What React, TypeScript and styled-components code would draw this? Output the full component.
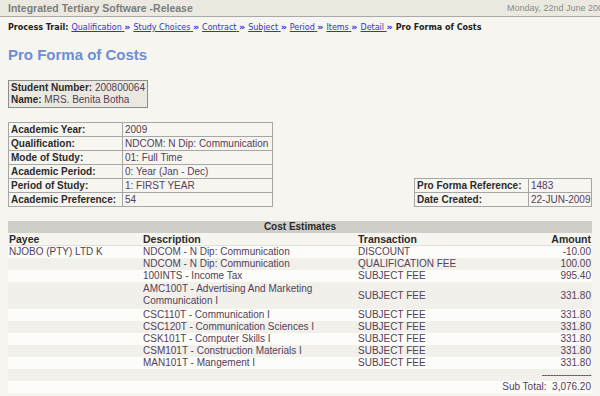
import React from "react";
import styled, { createGlobalStyle } from "styled-components";

const GlobalStyle = createGlobalStyle`
  html, body {
    margin: 0;
    padding: 0;
    background: #f6f5f0;
    overflow: hidden;
  }
  body {
    font-family: "Liberation Sans", Arial, sans-serif;
    font-size: 10px;
    color: #2b2b2b;
  }
`;

const Page = styled.div`
  width: 600px;
  height: 396px;
  overflow: hidden;
`;

const TopBar = styled.div`
  display: flex;
  justify-content: space-between;
  align-items: center;
  width: 612px;
  height: 17px;
  box-sizing: border-box;
  padding: 0 4px 0 8px;
  background: #ebe9df;
  border-bottom: 1px solid #a9a9a9;
`;

const AppName = styled.span`
  font-weight: bold;
  font-size: 10.5px;
  color: #7c7c7c;
`;

const Today = styled.span`
  font-size: 9px;
  color: #8a8a8a;
  white-space: nowrap;
`;

const Trail = styled.div`
  padding: 4px 8px 0;
  font-family: "DejaVu Sans", Verdana, sans-serif;
  font-size: 8px;
  line-height: 12px;
  color: #222;
  white-space: nowrap;
`;

const TrailLabel = styled.b`
  margin-right: 3px;
`;

const TrailLink = styled.a`
  color: #3434c4;
  text-decoration: underline;
`;

const Sep = styled.span`
  color: #3434c4;
  font-weight: bold;
  font-size: 9.5px;
  margin: 0 3px 0 0;
`;

const Current = styled.b``;

const Content = styled.div`
  padding: 0 8px;
`;

const Title = styled.h1`
  margin: 12px 0 0;
  font-size: 15px;
  line-height: 18px;
  font-weight: bold;
  color: #6b8ed6;
`;

const StudentBox = styled.div`
  display: inline-block;
  margin-top: 16px;
  padding: 1px 2px 1px 2px;
  border: 1px solid #8c8c8c;
  background: #ebe9df;
  line-height: 12px;
`;

const Line = styled.div``;

const Label = styled.b`
  color: #2b2b2b;
`;

const Value = styled.span`
  color: #54405a;
`;

const InfoRow = styled.div`
  display: flex;
  justify-content: space-between;
  align-items: flex-end;
  margin-top: 14px;
`;

const InfoTable = styled.table<{ $width: number }>`
  width: ${(p) => p.$width}px;
  table-layout: fixed;
  border-collapse: collapse;
  border: 1px solid #bdbdbd;
`;

const Col = styled.col<{ $width?: number }>`
  width: ${(p) => (p.$width ? `${p.$width}px` : "auto")};
`;

const InfoLabel = styled.th`
  text-align: left;
  font-weight: bold;
  color: #2b2b2b;
  border: 1px solid #a6a6a6;
  padding: 0 2px;
  height: 13px;
  line-height: 12px;
  white-space: nowrap;
`;

const InfoValue = styled.td`
  color: #54405a;
  border: 1px solid #a6a6a6;
  padding: 0 2px;
  height: 13px;
  line-height: 12px;
  white-space: nowrap;
`;

const CostTable = styled.table`
  width: 584px;
  table-layout: fixed;
  margin-top: 14px;
  border-collapse: collapse;
`;

const CostTitle = styled.th`
  background: #d0cec8;
  font-weight: bold;
  text-align: center;
  height: 12px;
  line-height: 12px;
  padding: 0;
  color: #2b2b2b;
`;

const ColHead = styled.th<{ $right?: boolean }>`
  text-align: ${(p) => (p.$right ? "right" : "left")};
  font-weight: bold;
  font-size: 10.5px;
  color: #2b2b2b;
  padding: 0 1px;
  height: 12px;
  line-height: 12px;
  border-bottom: 1px solid #e2e0da;
`;

const CostRow = styled.tr<{ $shade: boolean }>`
  background: ${(p) => (p.$shade ? "#f1f0ea" : "#fcfcf9")};
`;

const Cell = styled.td<{ $right?: boolean }>`
  text-align: ${(p) => (p.$right ? "right" : "left")};
  color: #54405a;
  padding: 0 1px;
  line-height: 12px;
  height: 12px;
  vertical-align: middle;
  white-space: nowrap;
`;

const WrapCell = styled(Cell)`
  white-space: normal;
  line-height: 12px;
  padding: 1px 18px 2px 1px;
`;

const Dashes = styled.span`
  letter-spacing: -0.6px;
  color: #54405a;
`;

const info = [
  ["Academic Year:", "2009"],
  ["Qualification:", "NDCOM: N Dip: Communication"],
  ["Mode of Study:", "01: Full Time"],
  ["Academic Period:", "0: Year (Jan - Dec)"],
  ["Period of Study:", "1: FIRST YEAR"],
  ["Academic Preference:", "54"],
];

const reference = [
  ["Pro Forma Reference:", "1483"],
  ["Date Created:", "22-JUN-2009"],
];

const costs = [
  ["NJOBO (PTY) LTD K", "NDCOM - N Dip: Communication", "DISCOUNT", "-10.00"],
  ["", "NDCOM - N Dip: Communication", "QUALIFICATION FEE", "100.00"],
  ["", "100INTS - Income Tax", "SUBJECT FEE", "995.40"],
  ["", "AMC100T - Advertising And Marketing Communication I", "SUBJECT FEE", "331.80"],
  ["", "CSC110T - Communication I", "SUBJECT FEE", "331.80"],
  ["", "CSC120T - Communication Sciences I", "SUBJECT FEE", "331.80"],
  ["", "CSK101T - Computer Skills I", "SUBJECT FEE", "331.80"],
  ["", "CSM101T - Construction Materials I", "SUBJECT FEE", "331.80"],
  ["", "MAN101T - Mangement I", "SUBJECT FEE", "331.80"],
];

const trail = ["Qualification", "Study Choices", "Contract", "Subject", "Period", "Items", "Detail"];

export default function App() {
  return (
    <Page>
      <GlobalStyle />
      <TopBar>
        <AppName>Integrated Tertiary Software -Release</AppName>
        <Today>Monday, 22nd June 2009</Today>
      </TopBar>
      <Trail>
        <TrailLabel>Process Trail:</TrailLabel>
        {trail.map((t) => (
          <React.Fragment key={t}>
            <TrailLink href="#">{t} </TrailLink>
            <Sep>»</Sep>
          </React.Fragment>
        ))}
        <Current>Pro Forma of Costs</Current>
      </Trail>
      <Content>
        <Title>Pro Forma of Costs</Title>
        <StudentBox>
          <Line>
            <Label>Student Number:</Label> <Value>200800064</Value>
          </Line>
          <Line>
            <Label>Name:</Label> <Value>MRS. Benita Botha</Value>
          </Line>
        </StudentBox>
        <InfoRow>
          <InfoTable $width={265}>
            <colgroup>
              <Col $width={114} />
              <Col />
            </colgroup>
            <tbody>
              {info.map(([k, v]) => (
                <tr key={k}>
                  <InfoLabel>{k}</InfoLabel>
                  <InfoValue>{v}</InfoValue>
                </tr>
              ))}
            </tbody>
          </InfoTable>
          <InfoTable $width={178}>
            <colgroup>
              <Col $width={114} />
              <Col />
            </colgroup>
            <tbody>
              {reference.map(([k, v]) => (
                <tr key={k}>
                  <InfoLabel>{k}</InfoLabel>
                  <InfoValue>{v}</InfoValue>
                </tr>
              ))}
            </tbody>
          </InfoTable>
        </InfoRow>
        <CostTable>
          <colgroup>
            <Col $width={134} />
            <Col $width={215} />
            <Col $width={180} />
            <Col />
          </colgroup>
          <thead>
            <tr>
              <CostTitle colSpan={4}>Cost Estimates</CostTitle>
            </tr>
            <tr>
              <ColHead>Payee</ColHead>
              <ColHead>Description</ColHead>
              <ColHead>Transaction</ColHead>
              <ColHead $right>Amount</ColHead>
            </tr>
          </thead>
          <tbody>
            {costs.map(([payee, desc, trans, amount], i) => {
              const Desc = desc.length > 40 ? WrapCell : Cell;
              return (
                <CostRow key={i} $shade={i % 2 === 1}>
                  <Cell>{payee}</Cell>
                  <Desc>{desc}</Desc>
                  <Cell>{trans}</Cell>
                  <Cell $right>{amount}</Cell>
                </CostRow>
              );
            })}
            <CostRow $shade={true}>
              <Cell colSpan={4} $right>
                <Dashes>------------------</Dashes>
              </Cell>
            </CostRow>
            <CostRow $shade={false}>
              <Cell colSpan={4} $right>
                Sub Total:&nbsp; 3,076.20
              </Cell>
            </CostRow>
          </tbody>
        </CostTable>
      </Content>
    </Page>
  );
}
